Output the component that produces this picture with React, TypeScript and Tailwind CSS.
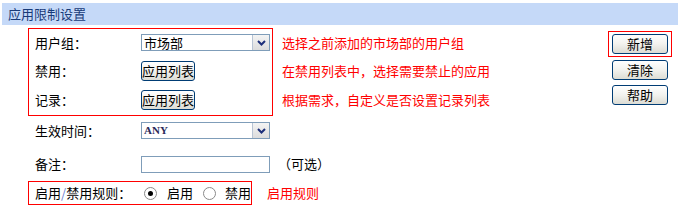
const font = "font-['SimSun','Noto_Sans_CJK_SC',sans-serif]";

function Select({ value, serif }: { value: string; serif?: boolean }) {
  return (
    <div className="flex h-[17px] w-[129px] shrink-0 items-stretch border border-[#7f9db9] bg-white">
      <span
        className={
          serif
            ? "flex-1 pl-[2px] font-['Liberation_Serif',serif] text-[11px] font-bold leading-[15px] text-[#2a2a5a]"
            : "flex-1 pl-[2px] text-[13px] leading-[15px] text-black"
        }
      >
        {value}
      </span>
      <span className="flex w-[17px] items-center justify-center border-l border-[#b8c4d4] bg-gradient-to-b from-[#f4f4f4] to-[#dcdcdc]">
        <svg width="9" height="6" viewBox="0 0 9 6">
          <path d="M1 1 L4.5 4.5 L8 1" fill="none" stroke="#1d2f7a" strokeWidth="2" />
        </svg>
      </span>
    </div>
  );
}

function Btn({ children, w = "w-[54px]" }: { children: React.ReactNode; w?: string }) {
  return (
    <button
      className={`${w} h-[20px] shrink-0 whitespace-nowrap rounded-[3px] border border-[#003c74] bg-gradient-to-b from-white via-[#f2f2ee] to-[#dcdcd4] text-[13px] leading-[18px] text-black`}
    >
      {children}
    </button>
  );
}

function Radio({ on }: { on?: boolean }) {
  return (
    <span className="flex h-[13px] w-[13px] shrink-0 items-center justify-center rounded-full border border-[#8a8a8a] bg-white">
      {on && <span className="h-[5px] w-[5px] rounded-full bg-black" />}
    </span>
  );
}

export default function App() {
  return (
    <div className={`h-[214px] w-[678px] whitespace-nowrap bg-white text-[13px] text-black ${font}`}>
      <div className="pt-[3px] pl-[2px]">
        <div className="flex h-[22px] items-center bg-[#c5d9f8] pl-[6px] text-[13px] text-[#183a78]">
          应用限制设置
        </div>
      </div>

      <div className="flex">
        <div className="ml-[28px] flex flex-col">
          <div className="mt-[3px] flex">
            <div className="flex w-[245px] flex-col border border-[#ff0000] pl-[6px]">
              <div className="flex h-[27px] items-center">
                <span className="w-[106px] shrink-0">用户组：</span>
                <Select value="市场部" />
              </div>
              <div className="flex h-[29px] items-center">
                <span className="w-[106px] shrink-0">禁用：</span>
                <Btn>应用列表</Btn>
              </div>
              <div className="flex h-[30px] items-center">
                <span className="w-[106px] shrink-0">记录：</span>
                <Btn>应用列表</Btn>
              </div>
            </div>
            <div className="ml-[9px] flex flex-col pt-[1px] text-[13px] text-[#ff0000]">
              <div className="flex h-[27px] items-center">选择之前添加的市场部的用户组</div>
              <div className="flex h-[29px] items-center">在禁用列表中，选择需要禁止的应用</div>
              <div className="flex h-[30px] items-center">根据需求，自定义是否设置记录列表</div>
            </div>
          </div>

          <div className="flex h-[29px] items-center pl-[7px]">
            <span className="w-[106px] shrink-0">生效时间：</span>
            <Select value="ANY" serif />
          </div>
          <div className="flex h-[34px] items-center pl-[7px] pt-[4px]">
            <span className="w-[106px] shrink-0">备注：</span>
            <span className="h-[17px] w-[129px] shrink-0 border border-[#7f9db9] bg-white" />
            <span className="ml-[8px]">（可选）</span>
          </div>

          <div className="mt-[2px] flex items-center">
            <div className="flex h-[24px] w-[224px] shrink-0 items-center border border-[#ff0000] pl-[6px]">
              <span className="w-[109px] shrink-0">
                启用<span className="text-[#6a7fd0]">/</span>禁用规则：
              </span>
              <Radio on />
              <span className="ml-[10px] shrink-0">启用</span>
              <span className="ml-[10px] shrink-0">
                <Radio />
              </span>
              <span className="ml-[9px] shrink-0">禁用</span>
            </div>
            <span className="ml-[15px] text-[#ff0000]">启用规则</span>
          </div>
        </div>

        <div className="ml-auto mr-[6px] mt-[6px] flex flex-col items-center">
          <div className="flex h-[26px] w-[64px] items-center justify-center border border-[#ff0000]">
            <Btn w="w-[56px]">新增</Btn>
          </div>
          <div className="mt-[3px]">
            <Btn w="w-[56px]">清除</Btn>
          </div>
          <div className="mt-[5px]">
            <Btn w="w-[56px]">帮助</Btn>
          </div>
        </div>
      </div>
    </div>
  );
}
